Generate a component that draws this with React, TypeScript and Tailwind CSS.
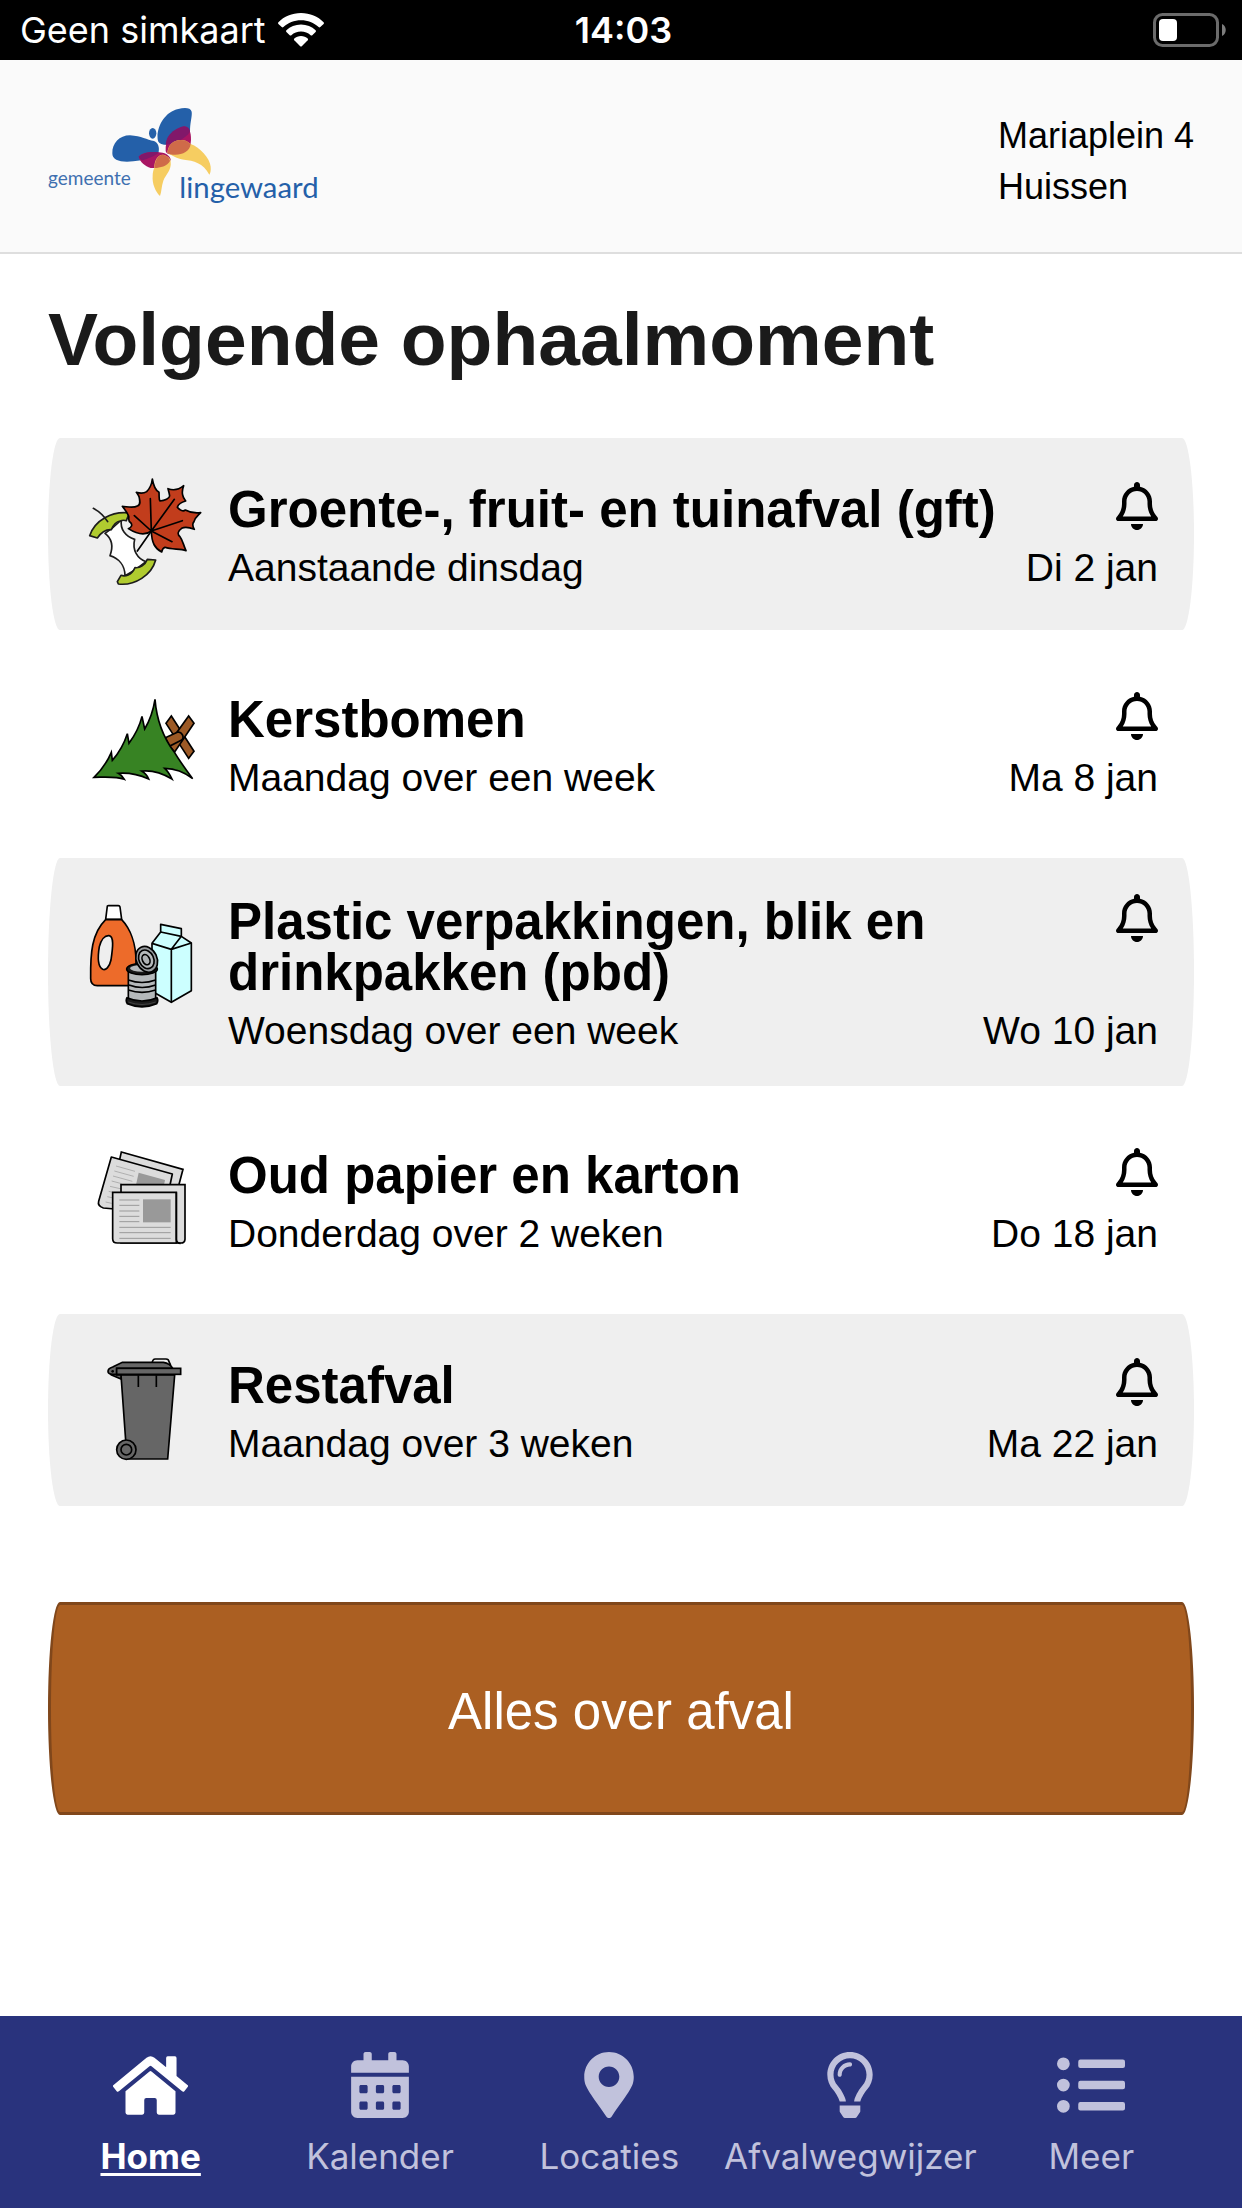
import { ReactNode } from 'react';
import { FaCalendarAlt, FaHome, FaListUl, FaMapMarkerAlt, FaRegLightbulb } from 'react-icons/fa';
import { FaRegBell } from 'react-icons/fa6';

function WifiIcon() {
  return (
    <svg viewBox="0 0 46 34" className="w-[46px] h-[34px]" fill="#fff" aria-hidden="true">
      <path d="M23 0C32 0 40 3.500 45.600 9.200C46.100 9.700 46.100 10.400 45.600 10.900L42.300 14.100C41.800 14.600 41.100 14.600 40.600 14.100C36 9.700 29.800 7.200 23 7.200S10 9.700 5.400 14.100C4.900 14.600 4.200 14.600 3.700 14.100L.4 10.900C-.1 10.400-.1 9.700.4 9.200C6 3.500 14 0 23 0Z" />
      <path d="M23 11.500C28.700 11.500 33.800 13.700 37.600 17.300C38.100 17.800 38.100 18.500 37.600 19L34.300 22.200C33.800 22.700 33.100 22.700 32.600 22.200C30 19.900 26.700 18.600 23 18.600S16 19.900 13.400 22.200C12.900 22.700 12.200 22.700 11.700 22.200L8.400 19C7.900 18.500 7.900 17.800 8.400 17.300C12.200 13.700 17.300 11.500 23 11.500Z" />
      <path d="M23 23C25.600 23 28 24 29.700 25.600C30.200 26.100 30.200 26.800 29.700 27.300L23.800 33.200C23.300 33.700 22.700 33.700 22.200 33.200L16.300 27.300C15.800 26.800 15.800 26.100 16.300 25.600C18 24 20.400 23 23 23Z" />
    </svg>
  );
}

function BatteryIcon() {
  return (
    <svg viewBox="0 0 74 34" className="w-[74px] h-[34px]" aria-hidden="true">
      <rect x="1.500" y="1.500" width="63" height="31" rx="8" fill="none" stroke="#6b6b6b" strokeWidth="3" />
      <path d="M69 11C74 13 74 21 69 23Z" fill="#7c7c7c" />
      <rect x="6" y="6" width="18" height="22" rx="4" fill="#fff" />
    </svg>
  );
}

function Logo() {
  return (
    <svg viewBox="54 54 828 306" className="w-[276px] h-[102px]" role="img" aria-label="gemeente lingewaard">
      <path d="M383 148C379 110 405 65 445 57C462 53 482 52 485 65C487 80 480 95 480 125C470 145 425 165 402 164C390 163 384 158 383 148Z" fill="#2460a9" />
      <path d="M247 190C246 160 268 136 300 136C335 138 350 150 372 153C384 158 390 172 385 190C365 200 345 212 310 214C275 218 246 212 247 190Z" fill="#2460a9" />
      <ellipse cx="368" cy="130" rx="11" ry="16" fill="#2460a9" />
      <path d="M407 182C405 150 425 118 460 110C476 108 484 125 483 150C483 180 460 194 436 194C420 194 408 192 407 182Z" fill="#a81563" />
      <path d="M326 200C335 186 375 184 398 188C414 192 422 202 422 210C412 228 385 236 362 234C345 228 330 216 326 200Z" fill="#a81563" />
      <path d="M414 140C425 124 442 113 462 109C472 110 478 114 480 125C466 147 430 162 407 164C408 155 410 147 414 140Z" fill="#81186a" />
      <path d="M326 200C342 186 365 184 386 187C384 193 365 202 338 211C332 209 328 206 326 200Z" fill="#81186a" />
      <path d="M412 188C414 165 430 150 452 150C466 150 474 155 482 162C510 172 540 205 542 230C543 242 541 250 538 254C520 218 490 212 462 209C440 205 425 196 412 188Z" fill="#f6cd61" />
      <path d="M373 234C372 210 385 193 399 194C412 196 422 205 422 215C425 240 408 252 400 272C394 290 395 305 390 318C376 305 366 280 368 258C368 248 370 240 373 234Z" fill="#f6cd61" />
      <path d="M413 188C414 165 430 150 452 150C466 150 474 155 482 162C480 184 458 194 436 194C424 194 417 192 413 188Z" fill="#cf6b49" />
      <path d="M374 234C373 210 386 193 399 194C410 196 418 203 420 213C412 228 390 234 374 234Z" fill="#cf6b49" />
      <text x="54" y="285" fontSize="57" fill="#3f70b0" fontFamily="Lato, sans-serif">gemeente</text>
      <text x="448" y="324" fontSize="88" fill="#2460a9" fontFamily="Lato, sans-serif">lingewaard</text>
    </svg>
  );
}

function GftIcon() {
  return (
    <svg viewBox="132 132 360 360" className="w-[120px] h-[120px]" fill="none" stroke="#1c1c1c" strokeWidth="5" strokeLinejoin="round" strokeLinecap="round" aria-hidden="true">
      <path d="M195 310C215 325 221 347 210 377C235 385 255 405 255 437L285 420L318 395C292 386 276 360 284 328C256 319 240 298 244 270L215 296Z" fill="#fff" />
      <path d="M149 317C165 270 215 243 268 249L259 272C250 269 245 271 240 273C228 275 220 285 214 299C200 298 185 305 172 324Z" fill="#b0cb2f" />
      <path d="M232 455L243 436C255 440 275 436 285 413C300 415 315 405 322 388L347 390C335 435 285 468 235 462Z" fill="#b0cb2f" />
      <path d="M160 235Q186 249 203 275" />
      <path d="M337 147C340 165 345 180 357 187C358 200 356 208 360 213C375 212 388 205 389 198C388 190 386 183 384 176C400 182 418 178 431 167C428 175 425 183 428 195C430 205 434 208 437 213C425 216 415 222 412 232C420 242 430 245 436 240C450 248 465 250 482 248C470 260 465 262 462 275C455 283 458 290 463 298C450 293 435 290 425 295C415 302 410 312 420 320C428 330 430 345 438 362C420 355 395 360 375 352C368 355 366 360 365 366C345 355 335 340 334 303C315 318 290 312 265 296C275 292 278 285 272 278C262 272 268 265 266 258C262 248 255 240 247 229C262 230 280 235 292 228C303 225 300 212 297 200C294 193 291 190 289 187C300 190 312 190 320 185C330 175 335 165 337 147Z" fill="#c23d1c" stroke="#000" />
      <path d="M331 206L334 303L403 208M334 303L427 272M334 303L396 335M334 303L283 257M334 303L292 363" stroke="#000" />
    </svg>
  );
}

function TreeIcon() {
  return (
    <svg viewBox="132 42 360 360" className="w-[120px] h-[120px]" stroke="#000" strokeWidth="5" strokeLinejoin="miter" aria-hidden="true">
      <path d="M394 138L462 244L446 265L378 160Z" fill="#9c5a26" />
      <path d="M446 138L462 160L404 246L384 224Z" fill="#9c5a26" />
      <path d="M376 203L412 187C424 183 435 201 425 210L388 229Z" fill="#9c5a26" />
      <path d="M345 88C350 150 372 205 402 245C420 275 440 302 458 326C432 305 405 295 374 295C382 302 390 314 396 327C365 308 335 300 305 303C315 309 322 317 326 327C295 313 264 308 235 310C244 315 249 321 253 328C225 318 190 322 162 322C185 300 202 275 214 247L217 271C237 248 252 222 262 191L267 220C285 195 299 168 306 139L314 177C330 150 340 120 345 88Z" fill="#378323" />
    </svg>
  );
}

function PlasticIcon() {
  return (
    <svg viewBox="132 132 360 360" className="w-[120px] h-[120px]" fill="none" stroke="#000" strokeWidth="5" strokeLinejoin="round" aria-hidden="true">
      <path d="M202 168Q203 167 206 167H235Q239 167 240 171L245 208H197Z" fill="#fff" />
      <path d="M197 209H245C270 235 288 280 288 335V395Q288 407 275 407H172Q152 406 152 386C151 310 155 250 197 209Z" fill="#ed6b2a" />
      <path d="M207 257C222 259 219 290 213 330C208 352 197 362 188 358C173 350 173 320 178 290C183 270 194 256 207 257Z" fill="#eee" />
      <path d="M362 246V223L424 236V259L454 279V422L394 457L336 424V280Z" fill="#cff" />
      <path d="M362 246L424 259L394 298L336 280M394 298L454 279M394 298V457" />
      <path d="M265 365H347V460Q306 476 265 460Z" fill="#b5b9bb" />
      <ellipse cx="306" cy="357" rx="46" ry="17" fill="#1a1a1a" />
      <ellipse cx="306" cy="355" rx="36" ry="10" fill="#b5b9bb" stroke="none" />
      <ellipse cx="320" cy="328" rx="31" ry="40" transform="rotate(-25 320 328)" fill="#999da0" />
      <ellipse cx="319" cy="328" rx="22" ry="29" transform="rotate(-25 319 328)" fill="#b5b9bb" />
      <ellipse cx="318" cy="329" rx="11" ry="16" transform="rotate(-25 318 329)" fill="#aeb2b4" />
      <path d="M265 390Q306 405 347 390M267 405Q306 420 347 405M265 420Q306 434 347 420" />
      <path d="M261 443Q306 463 351 443Q356 453 350 461Q306 480 262 461Q256 453 261 443Z" fill="#1a1a1a" />
      <path d="M265 456Q306 471 347 456" stroke="#555" strokeWidth="2" />
    </svg>
  );
}

function PaperIcon() {
  return (
    <svg viewBox="132 30 360 360" className="w-[120px] h-[120px]" fill="#dcdcdc" stroke="#000" strokeWidth="5" aria-hidden="true">
      <path d="M244 66L429 118L410 190L225 150Z" />
      <path d="M214 81L397 132L372 250L190 234Q172 228 176 214Z" strokeLinejoin="round" />
      <path d="M296 128L375 150L368 185L288 165Z" fill="#999" stroke="none" />
      <path d="M228 108L285 124M223 123L281 139M219 138L277 154M215 153L245 161M210 169L245 177M206 184L230 190M202 200L220 204M197 216L215 220" stroke="#999" strokeWidth="2" />
      <path d="M243 164H435V328Q434 339 423 339H243Z" />
      <path d="M218 187H409V339H232Q218 339 218 326Z" />
      <path d="M409 187V328Q410 340 422 340" fill="none" />
      <rect x="309" y="208" width="83" height="69" fill="#999" stroke="none" />
      <path d="M238 210H298M238 226H298M238 243H298M238 259H298M238 275H298M238 292H392M238 308H392M238 325H392" stroke="#999" strokeWidth="3" />
    </svg>
  );
}

function BinIcon() {
  return (
    <svg viewBox="132 120 360 360" className="w-[120px] h-[120px]" fill="#666" stroke="#000" strokeWidth="5" aria-hidden="true">
      <path d="M336 162Q337 147 346 147H378Q386 147 387 155L392 165" fill="#eee" />
      <path d="M243 195H404L383 447H261Z" />
      <path d="M230 174L213 178Q202 185 213 194L243 207V195H230Z" />
      <path d="M218 171L247 157H370Q390 160 398 175H230V193H218Q204 193 204 184T218 171Z" />
      <rect x="230" y="175" width="192" height="18" />
      <circle cx="218" cy="184" r="4" fill="#000" stroke="none" />
      <path d="M295 196V231M349 196V231" />
      <circle cx="259" cy="419" r="29" />
      <circle cx="259" cy="419" r="16" />
    </svg>
  );
}

interface Pickup {
  name: string;
  when: string;
  date: string;
  icon: ReactNode;
}

const pickups: Pickup[] = [
  { name: 'Groente-, fruit- en tuinafval (gft)', when: 'Aanstaande dinsdag', date: 'Di 2 jan', icon: <GftIcon /> },
  { name: 'Kerstbomen', when: 'Maandag over een week', date: 'Ma 8 jan', icon: <TreeIcon /> },
  { name: 'Plastic verpakkingen, blik en drinkpakken (pbd)', when: 'Woensdag over een week', date: 'Wo 10 jan', icon: <PlasticIcon /> },
  { name: 'Oud papier en karton', when: 'Donderdag over 2 weken', date: 'Do 18 jan', icon: <PaperIcon /> },
  { name: 'Restafval', when: 'Maandag over 3 weken', date: 'Ma 22 jan', icon: <BinIcon /> },
];

const tabs = [
  { label: 'Home', icon: FaHome, iconClass: 'h-[75px] w-auto', active: true },
  { label: 'Kalender', icon: FaCalendarAlt, iconClass: 'h-[66px] w-auto', active: false },
  { label: 'Locaties', icon: FaMapMarkerAlt, iconClass: 'h-[66px] w-auto', active: false },
  { label: 'Afvalwegwijzer', icon: FaRegLightbulb, iconClass: 'h-[66px] w-auto', active: false },
  { label: 'Meer', icon: FaListUl, iconClass: 'h-[68px] w-auto', active: false },
];

function PickupCard({ pickup }: { pickup: Pickup }) {
  return (
    <li className="flex items-start gap-6 p-9 rounded-[12px/50%] odd:bg-[#efefef]">
      <div className="shrink-0">{pickup.icon}</div>
      <div className="flex-1 min-h-[120px] flex flex-col justify-center">
        <div className="flex items-start justify-between gap-6">
          <h2 className="pt-[2px] text-[51px] leading-[51px] font-bold">{pickup.name}</h2>
          <button className="shrink-0" aria-label={`Herinnering ${pickup.name}`}>
            <FaRegBell className="w-[42px] h-12" />
          </button>
        </div>
        <div className="mt-[13px] flex justify-between text-[39px] leading-[39px]">
          <p>{pickup.when}</p>
          <p>{pickup.date}</p>
        </div>
      </div>
    </li>
  );
}

export default function App() {
  return (
    <div className="min-h-screen flex flex-col bg-white text-black font-['Liberation_Sans',Arial,sans-serif]">
      <div className="h-[60px] pl-5 pr-[15px] flex items-center bg-black text-white text-[36px] font-['Inter',sans-serif]">
        <div className="flex-1 flex items-center gap-3">
          <span>Geen simkaart</span>
          <WifiIcon />
        </div>
        <span className="font-semibold">14:03</span>
        <div className="flex-1 flex justify-end">
          <BatteryIcon />
        </div>
      </div>

      <header className="flex items-start justify-between px-12 pt-12 pb-10 bg-[#fafafa] border-b-2 border-[#dedede]">
        <Logo />
        <address className="pt-[2px] not-italic text-[36px] leading-[51px]">
          Mariaplein 4
          <br />
          Huissen
        </address>
      </header>

      <main className="flex-1 px-12 pt-12">
        <h1 className="text-[75px] leading-[75px] font-bold text-[#1a1a1a]">Volgende ophaalmoment</h1>
        <ul className="mt-[61px] flex flex-col gap-[18px]">
          {pickups.map((pickup) => (
            <PickupCard key={pickup.name} pickup={pickup} />
          ))}
        </ul>
        <button className="mt-24 w-full pt-[81px] pb-[75px] rounded-[12px/50%] border-3 border-[#80471b] bg-[#ab5f22] text-white text-[51px] leading-[51px]">
          Alles over afval
        </button>
      </main>

      <nav className="flex px-9 pt-9 pb-7 bg-[#29337d] font-['Inter',sans-serif]">
        {tabs.map((tab) => (
          <a
            key={tab.label}
            href="#"
            aria-current={tab.active ? 'page' : undefined}
            className={
              tab.active
                ? 'flex-1 flex flex-col items-center gap-[14px] text-white font-bold underline decoration-3 underline-offset-4'
                : 'flex-1 flex flex-col items-center gap-[14px] text-[#c1c2dc]'
            }
          >
            <span className="h-[66px] flex items-center">
              <tab.icon className={tab.iconClass} />
            </span>
            <span className="text-[35px] leading-[48px]">{tab.label}</span>
          </a>
        ))}
      </nav>
    </div>
  );
}
